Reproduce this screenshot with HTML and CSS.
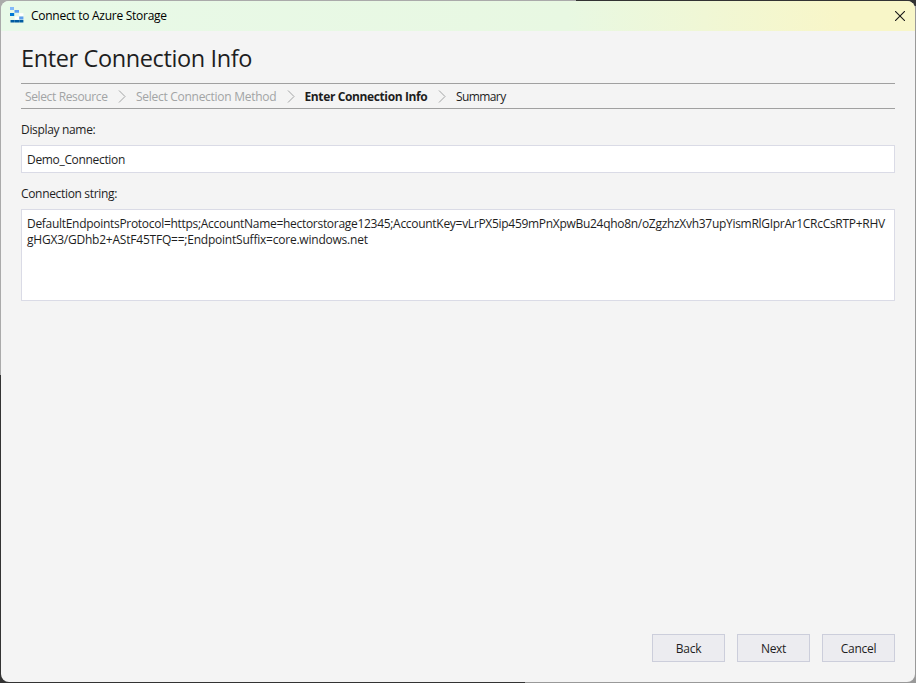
FILE: index.html
```html
<!DOCTYPE html>
<html lang="en">
<head>
<meta charset="utf-8">
<title>Connect to Azure Storage</title>
<link rel="stylesheet" href="styles.css">
</head>
<body>
<div class="window">
  <header class="titlebar">
    <svg class="app-icon" width="14" height="16" viewBox="0 0 14 16">
      <path fill="#83b9f9" d="M0 0h4v3H0z"/>
      <path fill="#5ea0ef" d="M4.5 3H9v2.7H4.5zM9.2 9.5h4.2v3H9.2z"/>
      <path fill="#0078d4" d="M0 6h4.2v3H0z"/>
      <path fill="#fff" d="M9.2 6.3h4.2v2.7H9.2zM4.7 9.5H9v3H4.7z"/>
      <path fill="#005ba1" d="M.5 13h3.9v2.5H.5zM4.6 13H9v2.5H4.6zM9.2 13h4.2v2.5H9.2z"/>
    </svg>
    <span class="title">Connect to Azure Storage</span>
    <svg class="close" width="10" height="10" viewBox="0 0 10 10"><path d="M0 0L10 10M10 0L0 10" stroke="#1a1a1a" stroke-width="1.1"/></svg>
  </header>
  <main class="content">
    <h1>Enter Connection Info</h1>
    <nav class="steps">
      <span class="step done s1">Select Resource</span>
      <svg class="chev" width="8" height="13" viewBox="0 0 8 13"><path d="M1 .5l6 6-6 6"/></svg>
      <span class="step done s2">Select Connection Method</span>
      <svg class="chev" width="8" height="13" viewBox="0 0 8 13"><path d="M1 .5l6 6-6 6"/></svg>
      <span class="step current s3">Enter Connection Info</span>
      <svg class="chev" width="8" height="13" viewBox="0 0 8 13"><path d="M1 .5l6 6-6 6"/></svg>
      <span class="step s4">Summary</span>
    </nav>
    <div class="label">Display name:</div>
    <div class="field name">Demo_Connection</div>
    <div class="label">Connection string:</div>
    <div class="field string"><span class="row1">DefaultEndpointsProtocol=https;AccountName=hectorstorage12345;AccountKey=vLrPX5ip459mPnXpwBu24qho8n/oZgzhzXvh37upYismRlGIprAr1CRcCsRTP+RHV</span><br><span class="row2">gHGX3/GDhb2+AStF45TFQ==;EndpointSuffix=core.windows.net</span></div>
  </main>
  <footer class="actions">
    <button>Back</button>
    <button>Next</button>
    <button>Cancel</button>
  </footer>
</div>
</body>
</html>
```
FILE: styles.css
```css
* { box-sizing: border-box; }
body {
  margin: 0;
  height: 683px;
  overflow: hidden;
  padding: 1px;
  background:
    linear-gradient(90deg, #aaa 576px, #333 576px) top / 100% 6px no-repeat,
    linear-gradient(90deg, #333 525px, #999 525px) bottom / 100% 6px no-repeat,
    linear-gradient(#aaa 375px, #333 375px) left / 6px 100% no-repeat,
    #999;
  font: 12px/16px "Open Sans", sans-serif;
  letter-spacing: -.33px;
  color: #1e1e1e;
}
.window {
  height: 681px;
  border-radius: 8px;
  overflow: hidden;
  background: #f4f4f4;
  display: flex;
  flex-direction: column;
}
.titlebar {
  height: 30px;
  display: flex;
  align-items: center;
  padding: 0 10px 0 9px;
  background: linear-gradient(90deg, #e8f9e8 0%, #e8f8e2 62%, #f8f6c8 92%);
}
.app-icon { margin-bottom: 2px; }
.title { margin-left: 7px; color: #000; letter-spacing: -.27px; }
.close { margin-left: auto; }
.content { padding: 0 20px; flex: 1; }
h1 { margin: 11px 0 8px; font-size: 23.5px; line-height: 33px; font-weight: 400; letter-spacing: -.38px; white-space: nowrap; }
.steps {
  height: 26px;
  display: flex;
  align-items: center;
  border: solid #a0a0a0;
  border-width: 1px 0;
  padding-left: 4px;
  white-space: nowrap;
}
.step { padding-top: 2px; flex: none; }
.s1 { width: 83px; letter-spacing: -.37px; }
.s2 { width: 140.5px; letter-spacing: -.28px; }
.s3 { width: 123.5px; letter-spacing: -.38px; }
.s4 { letter-spacing: -.6px; }
.done { color: #a2a4a5; }
.current { font-weight: 700; }
.chev { flex: none; margin: 0 10px; fill: none; stroke: #a2a4a5; }
.label { margin: 13px 0 7px; }
.field { width: 874px; border: 1px solid #dadbe6; background: #fff; padding: 6px 5px; white-space: nowrap; }
.name { height: 28px; }
.string { height: 92px; }
.row1 { letter-spacing: -.295px; }
.row2 { letter-spacing: -.22px; }
.actions { display: flex; justify-content: flex-end; gap: 12px; padding: 0 20px 20px; }
button {
  width: 73px; height: 28px; padding: 2px 0 0;
  border: 1px solid #cccedb; background: #ececf0;
  font: inherit; color: inherit; letter-spacing: -.3px;
}
```
